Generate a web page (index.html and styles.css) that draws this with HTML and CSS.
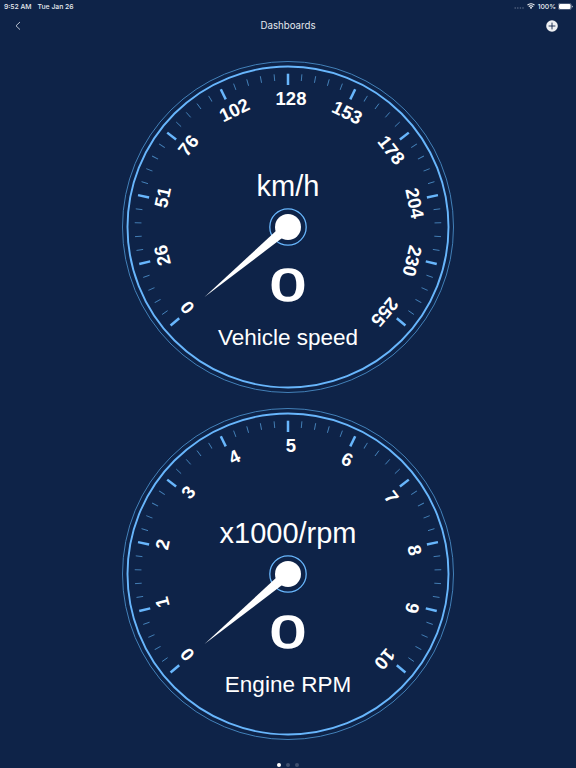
FILE: index.html
```
<!DOCTYPE html>
<html lang="en">
	<head>
		<meta charset="UTF-8" />
		<meta
			name="viewport"
			content="width=device-width, initial-scale=1.0" />
		<title>Dashboards</title>

		<link rel="stylesheet" href="styles.css">
	</head>
	<body>
		<div class="status">
			<span class="status__time">9:52 AM</span>
			<span>Tue Jan 26</span>
			<div class="status__right">
				<svg class="status__cell" viewBox="0 0 10 2">
					<circle cx="1.2" cy="1" r=".8" />
					<circle cx="3.8" cy="1" r=".8" />
					<circle cx="6.4" cy="1" r=".8" />
					<circle cx="9" cy="1" r=".8" />
				</svg>
				<svg class="status__wifi" viewBox="0 0 8 6">
					<path d="M.5 2.2a5 5 0 0 1 7 0M1.8 3.6a3.1 3.1 0 0 1 4.4 0" />
					<path class="status__wifi-dot" d="M4 6 2.8 4.7a1.7 1.7 0 0 1 2.4 0z" />
				</svg>
				<span class="status__percent">100%</span>
				<svg class="status__battery" viewBox="0 0 15 7">
					<rect class="status__shell" x=".3" y=".3" width="13" height="6.4" rx="1.8" />
					<rect x="1" y="1" width="11.6" height="5" rx="1.2" />
					<path d="M13.9 2.4v2.2q.8-.3.8-1.1t-.8-1.1z" />
				</svg>
			</div>
		</div>

		<header class="nav">
			<svg class="nav__back" viewBox="0 0 6 10"><path d="M5 1 1 4.8 5 8.6" /></svg>
			<h1 class="nav__title">Dashboards</h1>
			<svg class="nav__add" viewBox="0 0 12 12">
				<circle cx="6" cy="6" r="5.8" />
				<path d="M6 2.6v6.8M2.6 6h6.8" />
			</svg>
		</header>

		<main class="gauges">
			<svg
				class="gauge"
				viewBox="-167 -167 334 334"
				data-labels="0,26,51,76,102,128,153,178,204,230,255"
				data-unit="km/h"
				data-name="Vehicle speed"></svg>
			<svg
				class="gauge"
				viewBox="-167 -167 334 334"
				data-labels="0,1,2,3,4,5,6,7,8,9,10"
				data-unit="x1000/rpm"
				data-name="Engine RPM"></svg>
		</main>

		<div class="pager">
			<span class="pager__dot pager__dot--active"></span>
			<span class="pager__dot"></span>
			<span class="pager__dot"></span>
		</div>

		<script src="script.js"></script>
	</body>
</html>
```
FILE: styles.css
```
body {
	margin: 0;
	height: 768px;
	overflow: hidden;
	display: flex;
	flex-direction: column;
	background-color: #0e2348;
	color: #fff;
	font-family: 'Liberation Sans', Arial, sans-serif;
}

/* status bar */

.status {
	display: flex;
	align-items: center;
	height: 12px;
	padding: 0 4px;
	font-family: Inter, 'Liberation Sans', sans-serif;
	font-size: 6.8px;
	font-weight: 500;
	color: #e9ecf1;
}
.status__time {
	margin-right: 6px;
}
.status__right {
	margin-left: auto;
	display: flex;
	align-items: center;
}
.status__cell {
	width: 10px;
	height: 2px;
	margin: 4px 3px 0 0;
	fill: #5b6b87;
}
.status__wifi {
	width: 8px;
	height: 6px;
	margin-right: 3px;
	fill: none;
	stroke: #fff;
	stroke-width: 1.1;
}
.status__wifi-dot {
	fill: #fff;
	stroke: none;
}
.status__percent {
	margin-right: 2px;
}
.status__battery {
	width: 15px;
	height: 7px;
	margin-right: -1px;
	fill: #fff;
}
.status__shell {
	fill: none;
	stroke: #8391a8;
	stroke-width: 0.6;
}

/* navigation */

.nav {
	display: grid;
	grid-template-columns: 1fr auto 1fr;
	align-items: center;
	height: 27px;
	padding: 0 18px 0 15px;
}
.nav__back {
	width: 6px;
	height: 10px;
	fill: none;
	stroke: #c9d0dc;
	stroke-width: 0.9;
}
.nav__title {
	margin: -1px 0 0 3px;
	font-family: Inter, 'Liberation Sans', sans-serif;
	font-size: 9.7px;
	font-weight: 400;
	color: #e4e8ee;
}
.nav__add {
	width: 12px;
	height: 12px;
	justify-self: end;
	fill: #eef0f3;
}
.nav__add path {
	stroke: #0e2348;
	stroke-width: 0.9;
}

/* gauges */

.gauges {
	display: flex;
	flex-direction: column;
	align-items: center;
	gap: 12.8px;
	padding-top: 21.2px;
}
.gauge {
	width: 334px;
	height: 334px;
	fill: #fff;
}
.gauge__rim {
	fill: none;
	stroke: #4280b8;
	stroke-width: 1;
}
.gauge__ring {
	fill: none;
	stroke: #68b6fc;
	stroke-width: 1.9;
}
.gauge__ring--hub {
	stroke-width: 1.3;
}
.gauge__tick {
	stroke: #4684bc;
	stroke-width: 0.9;
}
.gauge__tick--major {
	stroke: #68b6fc;
	stroke-width: 2.5;
}
.gauge text {
	text-anchor: middle;
}
.gauge__label {
	font-size: 18.5px;
	font-weight: 700;
}
.gauge__unit {
	font-size: 29px;
}
.gauge__value {
	font-size: 45.5px;
	stroke: #fff;
	stroke-width: 1.6;
}
.gauge__name {
	font-size: 22.5px;
}

/* pager */

.pager {
	display: flex;
	justify-content: center;
	gap: 5px;
	margin-top: auto;
	padding-bottom: 1px;
}
.pager__dot {
	width: 4px;
	height: 4px;
	border-radius: 50%;
	background-color: #3e4f6d;
}
.pager__dot--active {
	background-color: #fff;
}
```
FILE: script.js
```
const START = -130;
const STEP = 26;
const MINOR = 5;

document.querySelectorAll('.gauge').forEach(drawGauge);

function drawGauge(gauge) {
	const labels = gauge.dataset.labels.split(',');
	let content = '<circle class="gauge__rim" r="165.5" /><circle class="gauge__ring" r="160.5" />';

	for (let i = 0; i <= (labels.length - 1) * MINOR; i++) {
		const angle = START + (i * STEP) / MINOR;
		const major = i % MINOR === 0;
		content += `<line class="gauge__tick${major ? ' gauge__tick--major' : ''}" y1="-153.3" y2="${major ? -142 : -146.6}" transform="rotate(${angle})" />`;
	}

	labels.forEach((label, i) => {
		content += `<text class="gauge__label" x="3" y="-122.4" transform="rotate(${START + i * STEP})">${label}</text>`;
	});

	content += `
		<text class="gauge__unit" y="-31">${gauge.dataset.unit}</text>
		<circle class="gauge__ring gauge__ring--hub" r="18.2" />
		<path d="M0-109 4.8-10h-9.6z" transform="rotate(${START})" />
		<circle r="13" />
		<text class="gauge__value" transform="translate(0 74) scale(1.4 1)">0</text>
		<text class="gauge__name" y="118.2">${gauge.dataset.name}</text>`;

	gauge.innerHTML = content;
}
```
